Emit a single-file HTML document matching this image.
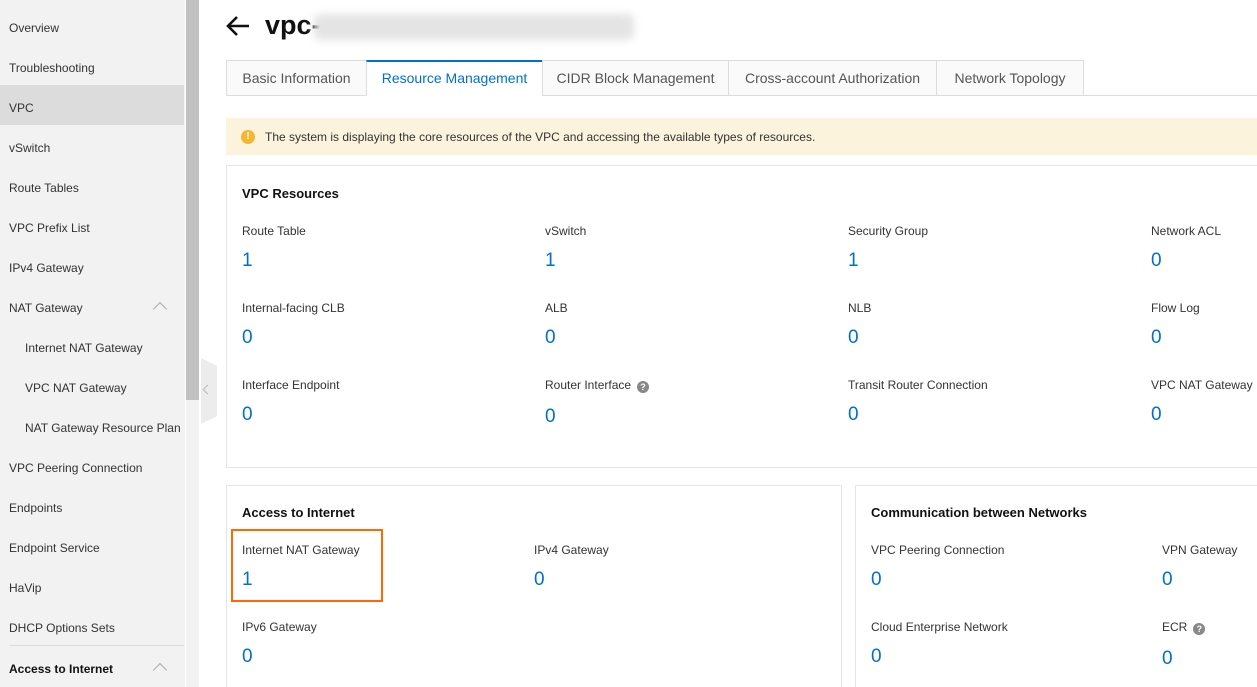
<!DOCTYPE html>
<html><head><meta charset="utf-8"><style>
*{box-sizing:border-box;margin:0;padding:0}
html,body{width:1257px;height:687px;overflow:hidden}
body{position:relative;background:#fff;font-family:"Liberation Sans",sans-serif;color:#333}
.a{position:absolute;white-space:nowrap}
#side{position:absolute;left:0;top:0;width:185px;height:687px;background:#f2f2f2}
.si{position:absolute;left:9px;font-size:12px;color:#333}
.sub{left:25px}
#sb{position:absolute;left:186px;top:0;width:13px;height:400px;background:#c1c1c1}
#sbt{position:absolute;left:186px;top:400px;width:13px;height:287px;background:#f2f2f2}
.tab{position:absolute;top:60px;height:36px;border:1px solid #ddd;background:#fafafa;font-size:14px;color:#555;text-align:center;line-height:34px}
.card{position:absolute;border:1px solid #e5e5e5;background:#fff}
.lb{position:absolute;font-size:12px;color:#333;white-space:nowrap}
.nm{position:absolute;font-size:19px;color:#0070cc;white-space:nowrap}
.h{position:absolute;font-size:13px;font-weight:bold;color:#111;white-space:nowrap}
.q{display:inline-block;width:12px;height:12px;border-radius:50%;background:#888;color:#fff;font-size:9px;text-align:center;line-height:12px;font-weight:bold;margin-left:6px;vertical-align:-1px}
.chev{position:absolute;left:155px;width:10px;height:10px;border-left:1.5px solid #aaa;border-top:1.5px solid #aaa;transform:rotate(45deg)}
</style></head><body>
<div id="side">
<div class="si" style="top:21px">Overview</div>
<div class="si" style="top:61px">Troubleshooting</div>
<div style="position:absolute;left:0;top:85px;width:184px;height:40px;background:#dcdcdc"></div>
<div class="si" style="top:101px">VPC</div>
<div class="si" style="top:141px">vSwitch</div>
<div class="si" style="top:181px">Route Tables</div>
<div class="si" style="top:221px">VPC Prefix List</div>
<div class="si" style="top:261px">IPv4 Gateway</div>
<div class="si" style="top:301px">NAT Gateway</div>
<div class="chev" style="top:304px"></div>
<div class="si sub" style="top:341px">Internet NAT Gateway</div>
<div class="si sub" style="top:381px">VPC NAT Gateway</div>
<div class="si sub" style="top:421px">NAT Gateway Resource Plan</div>
<div class="si" style="top:461px">VPC Peering Connection</div>
<div class="si" style="top:501px">Endpoints</div>
<div class="si" style="top:541px">Endpoint Service</div>
<div class="si" style="top:581px">HaVip</div>
<div class="si" style="top:621px">DHCP Options Sets</div>
<div style="position:absolute;left:9px;top:645px;width:175px;height:1px;background:#dcdce4"></div>
<div class="si" style="top:662px;font-weight:bold;color:#111">Access to Internet</div>
<div class="chev" style="top:665px"></div>
</div>
<div id="sb"></div><div id="sbt"></div>
<div style="position:absolute;left:201px;top:358px;width:16px;height:66px;background:#ececec;clip-path:polygon(0 0,100% 12%,100% 88%,0 100%)"></div>
<div class="a" style="left:204px;top:386px;width:7px;height:7px;border-left:1.5px solid #bbb;border-bottom:1.5px solid #bbb;transform:rotate(45deg)"></div>

<svg class="a" style="left:225px;top:15px" width="26" height="22" viewBox="0 0 26 22"><path d="M24 11H3M12 2L3 11l9 9" fill="none" stroke="#111" stroke-width="2.6"/></svg>
<div class="a" style="left:265px;top:10px;font-size:27px;font-weight:bold;color:#111">vpc-</div>
<div class="a" style="left:314px;top:14px;width:320px;height:26px;background:#e4e4e4;filter:blur(4px);border-radius:6px"></div>

<div class="a" style="left:226px;top:95px;width:1031px;height:1px;background:#ddd"></div>
<div class="tab" style="left:226px;width:141px">Basic Information</div>
<div class="tab" style="left:366px;width:177px;background:#fff;color:#0070cc;border-top:2px solid #0070cc;border-bottom-color:#fff;line-height:33px">Resource Management</div>
<div class="tab" style="left:542px;width:187px">CIDR Block Management</div>
<div class="tab" style="left:728px;width:209px">Cross-account Authorization</div>
<div class="tab" style="left:936px;width:148px">Network Topology</div>

<div class="a" style="left:226px;top:118px;width:1031px;height:37px;background:#fcf3dc"></div>
<div class="a" style="left:241px;top:130px;width:14px;height:14px;border-radius:50%;background:#f5b731;color:#fff;font-size:10px;font-weight:bold;text-align:center;line-height:14px">!</div>
<div class="a" style="left:265px;top:130px;font-size:12px;color:#333">The system is displaying the core resources of the VPC and accessing the available types of resources.</div>

<div class="card" style="left:226px;top:165px;width:1040px;height:303px"></div>
<div class="h" style="left:242px;top:186px">VPC Resources</div>
<div class="lb" style="left:242px;top:224px">Route Table</div><div class="nm" style="left:242px;top:250px">1</div>
<div class="lb" style="left:545px;top:224px">vSwitch</div><div class="nm" style="left:545px;top:250px">1</div>
<div class="lb" style="left:848px;top:224px">Security Group</div><div class="nm" style="left:848px;top:250px">1</div>
<div class="lb" style="left:1151px;top:224px">Network ACL</div><div class="nm" style="left:1151px;top:250px">0</div>
<div class="lb" style="left:242px;top:301px">Internal-facing CLB</div><div class="nm" style="left:242px;top:327px">0</div>
<div class="lb" style="left:545px;top:301px">ALB</div><div class="nm" style="left:545px;top:327px">0</div>
<div class="lb" style="left:848px;top:301px">NLB</div><div class="nm" style="left:848px;top:327px">0</div>
<div class="lb" style="left:1151px;top:301px">Flow Log</div><div class="nm" style="left:1151px;top:327px">0</div>
<div class="lb" style="left:242px;top:378px">Interface Endpoint</div><div class="nm" style="left:242px;top:404px">0</div>
<div class="lb" style="left:545px;top:378px">Router Interface<span class="q">?</span></div><div class="nm" style="left:545px;top:406px">0</div>
<div class="lb" style="left:848px;top:378px">Transit Router Connection</div><div class="nm" style="left:848px;top:404px">0</div>
<div class="lb" style="left:1151px;top:378px">VPC NAT Gateway</div><div class="nm" style="left:1151px;top:404px">0</div>

<div class="card" style="left:226px;top:485px;width:616px;height:210px"></div>
<div class="h" style="left:242px;top:505px">Access to Internet</div>
<div class="lb" style="left:242px;top:543px">Internet NAT Gateway</div><div class="nm" style="left:242px;top:569px">1</div>
<div class="a" style="left:231px;top:529px;width:152px;height:73px;border:2px solid #ff6a00"></div>
<div class="lb" style="left:534px;top:543px">IPv4 Gateway</div><div class="nm" style="left:534px;top:569px">0</div>
<div class="lb" style="left:242px;top:620px">IPv6 Gateway</div><div class="nm" style="left:242px;top:646px">0</div>

<div class="card" style="left:855px;top:485px;width:410px;height:210px"></div>
<div class="h" style="left:871px;top:505px">Communication between Networks</div>
<div class="lb" style="left:871px;top:543px">VPC Peering Connection</div><div class="nm" style="left:871px;top:569px">0</div>
<div class="lb" style="left:1162px;top:543px">VPN Gateway</div><div class="nm" style="left:1162px;top:569px">0</div>
<div class="lb" style="left:871px;top:620px">Cloud Enterprise Network</div><div class="nm" style="left:871px;top:646px">0</div>
<div class="lb" style="left:1162px;top:620px">ECR<span class="q">?</span></div><div class="nm" style="left:1162px;top:648px">0</div>
</body></html>
